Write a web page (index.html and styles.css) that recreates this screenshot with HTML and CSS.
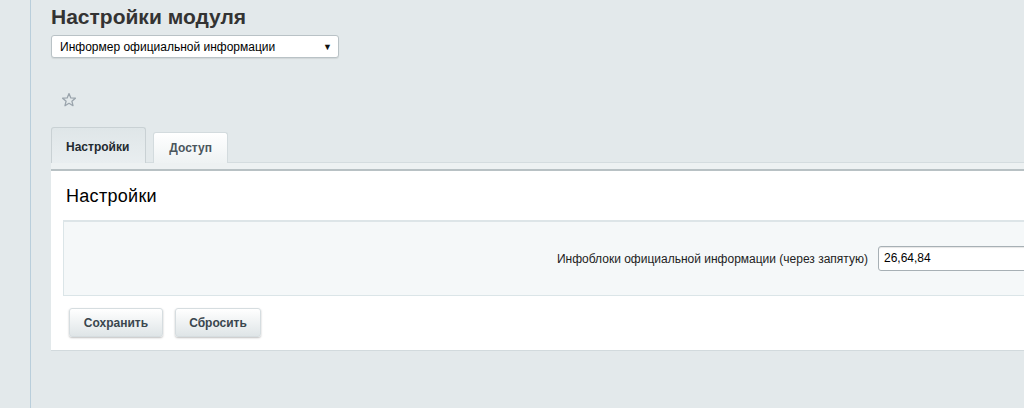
FILE: index.html
```html
<!DOCTYPE html>
<html lang="ru">
<head>
<meta charset="utf-8">
<title>Настройки модуля</title>
<link rel="stylesheet" href="styles.css">
</head>
<body>
<div class="page">
  <div class="content">
    <h1 class="title">Настройки модуля</h1>
    <div class="select">
      <span class="select-text">Информер официальной информации</span>
      <span class="select-arrow">▼</span>
    </div>
    <div class="star">
      <svg width="16" height="16" viewBox="0 0 16 16">
        <path d="M8 1.6 L9.8 5.9 L14.4 6.2 L10.9 9.2 L12 13.7 L8 11.3 L4 13.7 L5.1 9.2 L1.6 6.2 L6.2 5.9 Z" fill="none" stroke="#9aa4ac" stroke-width="1.3" stroke-linejoin="round"/>
      </svg>
    </div>
    <div class="tabs">
      <div class="tab tab-active">Настройки</div>
      <div class="tab">Доступ</div>
    </div>
    <div class="tab-strip"></div>
    <div class="panel">
      <h2 class="panel-title">Настройки</h2>
      <div class="fields">
        <label class="field-label">Инфоблоки официальной информации (через запятую)</label>
        <div class="field-input">26,64,84</div>
      </div>
      <div class="buttons">
        <button class="btn btn-save">Сохранить</button>
        <button class="btn btn-reset">Сбросить</button>
      </div>
    </div>
  </div>
</div>
</body>
</html>
```
FILE: styles.css
```css
html, body {
  margin: 0;
  padding: 0;
  height: 100%;
  overflow: hidden;
}
body {
  background: #e3e9eb;
  font-family: "Liberation Sans", Arial, sans-serif;
  color: #000;
}
.page {
  height: 100%;
  padding-left: 30px;
}
.content {
  height: 100%;
  width: 1150px;
  border-left: 1px solid #b9cedb;
  padding-left: 20px;
  box-sizing: border-box;
}
.title {
  margin: 0;
  padding-top: 5px;
  font-size: 21px;
  line-height: 24px;
  font-weight: bold;
  color: #333;
}
.select {
  margin-top: 6px;
  width: 288px;
  height: 23px;
  box-sizing: border-box;
  background: #fff;
  border: 1px solid #b9c2c6;
  border-radius: 3px;
  display: flex;
  align-items: center;
  justify-content: space-between;
  padding: 0 6px 0 8px;
  font-size: 12px;
  color: #000;
  box-shadow: 0 1px 1px rgba(0,0,0,0.08);
}
.select-arrow {
  font-size: 9px;
  color: #111;
}
.star {
  margin-top: 34px;
  margin-left: 10px;
  height: 16px;
}
.star svg { display: block; }
.tabs {
  margin-top: 19px;
  display: flex;
  align-items: flex-end;
  gap: 7px;
  height: 36px;
}
.tab {
  box-sizing: border-box;
  height: 31px;
  padding: 0 15px;
  display: flex;
  align-items: center;
  font-size: 12px;
  font-weight: bold;
  color: #4b565d;
  background: linear-gradient(#ffffff, #eef2f3);
  border: 1px solid #d3dbde;
  border-bottom: none;
  border-radius: 3px 3px 0 0;
}
.tab-active {
  height: 36px;
  padding-top: 3px;
  padding-left: 14px;
  padding-right: 16px;
  color: #1f2a30;
  background: linear-gradient(#dfe6e8, #e9eef0);
  border-color: #c9d1d4;
}
.tab-strip {
  height: 6px;
  background: #edf1f2;
  border-top: 1px solid #d4dcdf;
  border-bottom: 2px solid #b8c1c4;
  margin-top: -1px;
}
.panel {
  background: #fff;
  height: 180px;
  box-sizing: border-box;
  padding: 12px 0 0 12px;
  border-bottom: 1px solid #d2dadd;
}
.panel-title {
  margin: 0 0 0 3px;
  font-size: 18px;
  letter-spacing: 0.3px;
  line-height: 26px;
  font-weight: normal;
  color: #000;
}
.fields {
  margin-top: 11px;
  height: 76px;
  box-sizing: border-box;
  background: #f5f8f9;
  border: 1px solid #dbe5e8;
  border-top: 2px solid #dde5e8;
  display: grid;
  grid-template-columns: 809px 1fr;
  align-items: center;
}
.field-label {
  text-align: right;
  font-size: 12px;
  color: #222;
  padding-right: 5px;
  padding-top: 1px;
}
.field-input {
  margin-left: 5px;
  height: 25px;
  box-sizing: border-box;
  border: 1px solid #a7b0b5;
  border-radius: 3px;
  background: #fff;
  box-shadow: inset 0 1px 1px rgba(0,0,0,0.1);
  font-size: 12px;
  line-height: 23px;
  padding-left: 5px;
  color: #000;
}
.buttons {
  margin-top: 12px;
  margin-left: 6px;
  display: flex;
  gap: 12px;
}
.btn {
  height: 29px;
  box-sizing: border-box;
  padding: 0 13px;
  font-family: "Liberation Sans", Arial, sans-serif;
  font-size: 12px;
  font-weight: bold;
  color: #3a464e;
  background: linear-gradient(#ffffff, #dfe5e7);
  border: 1px solid #d6dde0;
  border-radius: 3px;
  box-shadow: 0 1px 2px rgba(0,0,0,0.25);
}
.btn-save { width: 94px; }
.btn-reset { width: 86px; }
```
